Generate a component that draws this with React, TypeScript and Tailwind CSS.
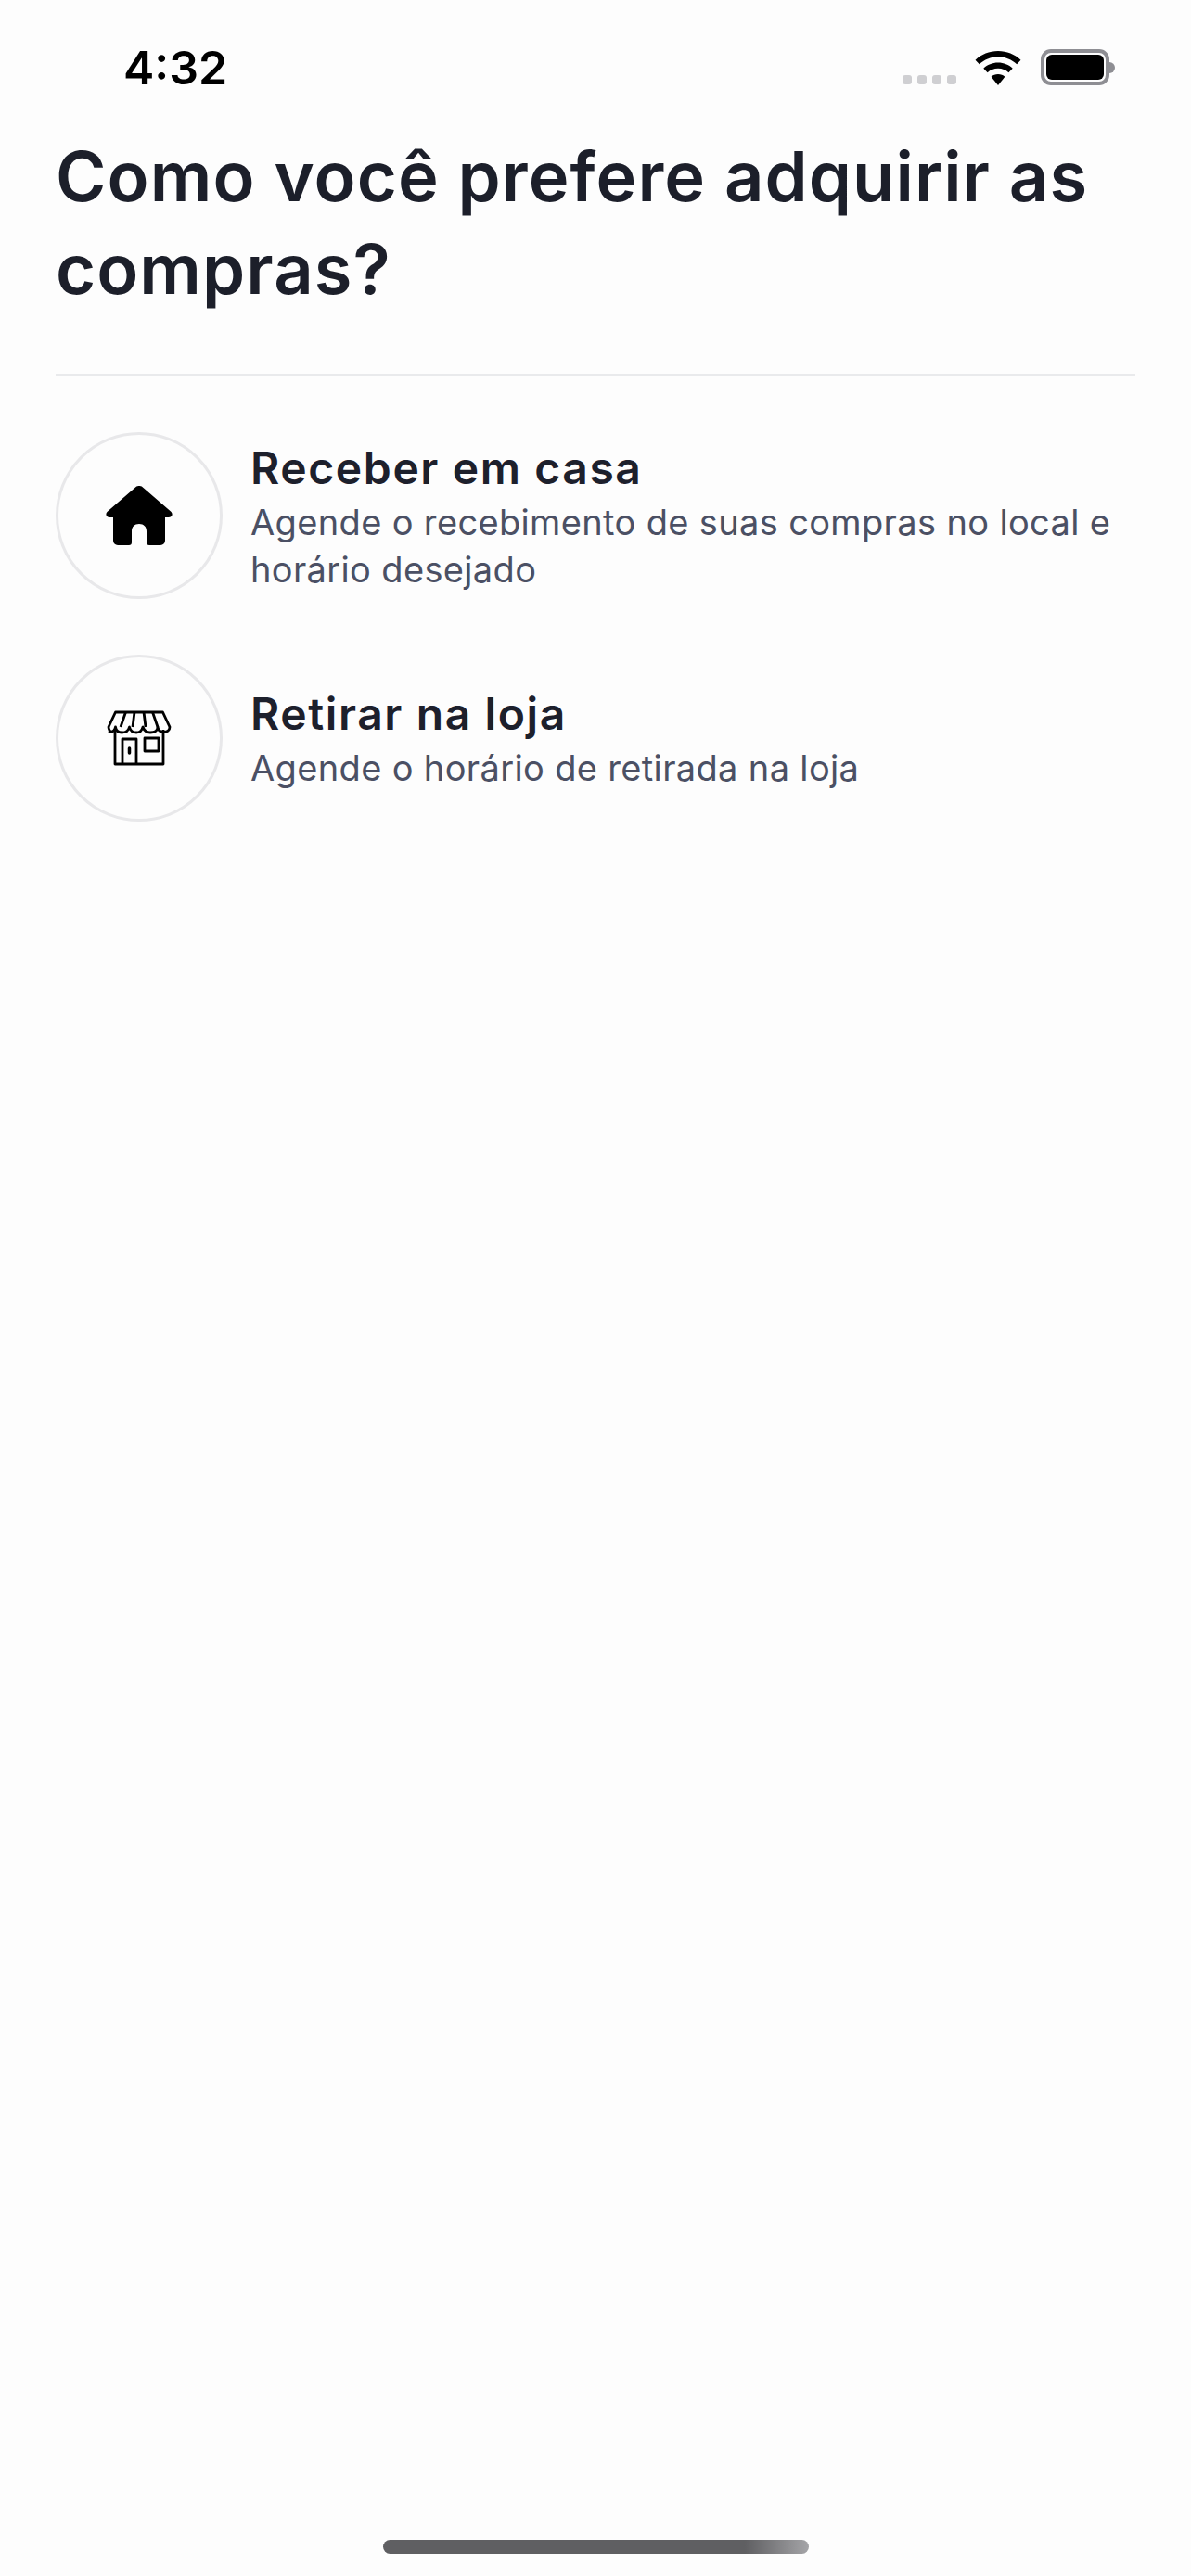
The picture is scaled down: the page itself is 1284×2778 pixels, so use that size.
function HomeIcon() {
  return (
    <svg width="72" height="64" viewBox="0 0 72 64" fill="#000">
      <path d="M31.500 2a6 6 0 0 1 9 0L70 27.500c3 2.800 1.600 6.500-2.500 6.500H64v25a5 5 0 0 1-5 5H47a3 3 0 0 1-3-3V49c0-5-3-8-8-8s-8 3-8 8v12a3 3 0 0 1-3 3H13a5 5 0 0 1-5-5V34H4.500C.4 34-1 30.300 2 27.500Z" />
    </svg>
  );
}

function StoreIcon() {
  return (
    <svg width="70" height="60" viewBox="0 0 70 60" fill="none" stroke="#000" strokeWidth="2.800" strokeLinejoin="round">
      <path d="M9 21v37h52V21" />
      <path d="M9.500 2h51L68 18c0 3.500-3 5.500-6.500 5.500-4 0-6-1.500-6.500-5.500 0 4-4 6-8 6s-6.500-2-8-6c-1 4-3.500 6-7 6s-6.500-2-7.500-6c-1 4-4 6-8 6s-6.500-2-7-6c-.5 4-3.500 5.500-6.500 5.500C5 23.500 2 21.500 2 18Z" />
      <path d="M15 18l5.500-16M28 18l2-16M42 18l-2-16M55 18 49.500 2" />
      <path d="M17 58V31h15v27M41 30h15v14H41Z" />
      <path d="M24.500 41v5" strokeWidth="3.500" strokeLinecap="round" />
    </svg>
  );
}

function Wifi() {
  return (
    <svg width="50" height="37" viewBox="0 0 50 37" fill="#000">
      <path d="M25 0c9.500 0 18 3.600 24.500 9.700l-4.300 4.600C39.900 9.300 32.800 6.300 25 6.300S10.100 9.300 4.800 14.300L.5 9.700C7 3.600 15.500 0 25 0Z" />
      <path d="M25 12.500c6.100 0 11.600 2.300 15.700 6.200l-4.300 4.600c-3-2.800-7-4.500-11.400-4.500s-8.400 1.700-11.400 4.500l-4.300-4.600c4.100-3.900 9.600-6.200 15.700-6.200Z" />
      <path d="M25 25c2.900 0 5.500 1 7.400 2.800L25 37l-7.400-9.200C19.500 26 22.100 25 25 25Z" />
    </svg>
  );
}

function Option({ icon, title, text }: { icon: React.ReactNode; title: string; text: string }) {
  return (
    <div className="flex items-center gap-[30px]">
      <div className="flex h-[180px] w-[180px] shrink-0 items-center justify-center rounded-full border-[3px] border-[#e8e8ea]">
        {icon}
      </div>
      <div className="flex-1 pt-[5px]">
        <h2 className="text-[48px] leading-[54px] font-semibold tracking-[1.600px] text-[#1d202c]">{title}</h2>
        <p className="mt-[6px] text-[38px] leading-[51px] tracking-[0.350px] text-[#4b5064]">{text}</p>
      </div>
    </div>
  );
}

export default function App() {
  return (
    <main className="flex h-[2778px] flex-col bg-[#fdfdfd] font-['Inter',sans-serif]">
      <div className="flex h-[140px] shrink-0 items-start justify-between pt-[53px] pr-[82px] pl-[133px]">
        <span className="text-[50px] leading-[40px] font-semibold text-black">4:32</span>
        <div className="flex items-end">
          <div className="flex gap-[6px] pb-px">
            <span className="h-[10px] w-[10px] rounded-[3px] bg-[#cfcfd2]" />
            <span className="h-[10px] w-[10px] rounded-[3px] bg-[#cfcfd2]" />
            <span className="h-[10px] w-[10px] rounded-[3px] bg-[#cfcfd2]" />
            <span className="h-[10px] w-[10px] rounded-[3px] bg-[#cfcfd2]" />
          </div>
          <div className="ml-5">
            <Wifi />
          </div>
          <div className="ml-[21px] flex items-center">
            <div className="h-[39px] w-[74px] rounded-[11px] border-[4px] border-[#8e8e93] p-[2px]">
              <div className="h-full w-full rounded-[6px] bg-black" />
            </div>
            <span className="h-[12px] w-[6px] rounded-r-full bg-[#8e8e93]" />
          </div>
        </div>
      </div>

      <section className="px-[60px]">
        <h1 className="text-[74px] leading-[100px] font-semibold tracking-[1.100px] text-[#1c1f2a]">Como você prefere adquirir as compras?</h1>
        <hr className="mt-[63px] border-t-[3px] border-[#e9eaec]" />
      </section>

      <section className="mt-[60px] flex flex-col gap-[60px] px-[60px]">
        <Option icon={<HomeIcon />} title="Receber em casa" text="Agende o recebimento de suas compras no local e horário desejado" />
        <Option icon={<StoreIcon />} title="Retirar na loja" text="Agende o horário de retirada na loja" />
      </section>

      <div className="mt-auto flex justify-center pb-6">
        <div className="h-[15px] w-[459px] rounded-full bg-gradient-to-r from-[#5f5f62] via-[#5f5f62] via-85% to-[#a5a5a8]" />
      </div>
    </main>
  );
}
